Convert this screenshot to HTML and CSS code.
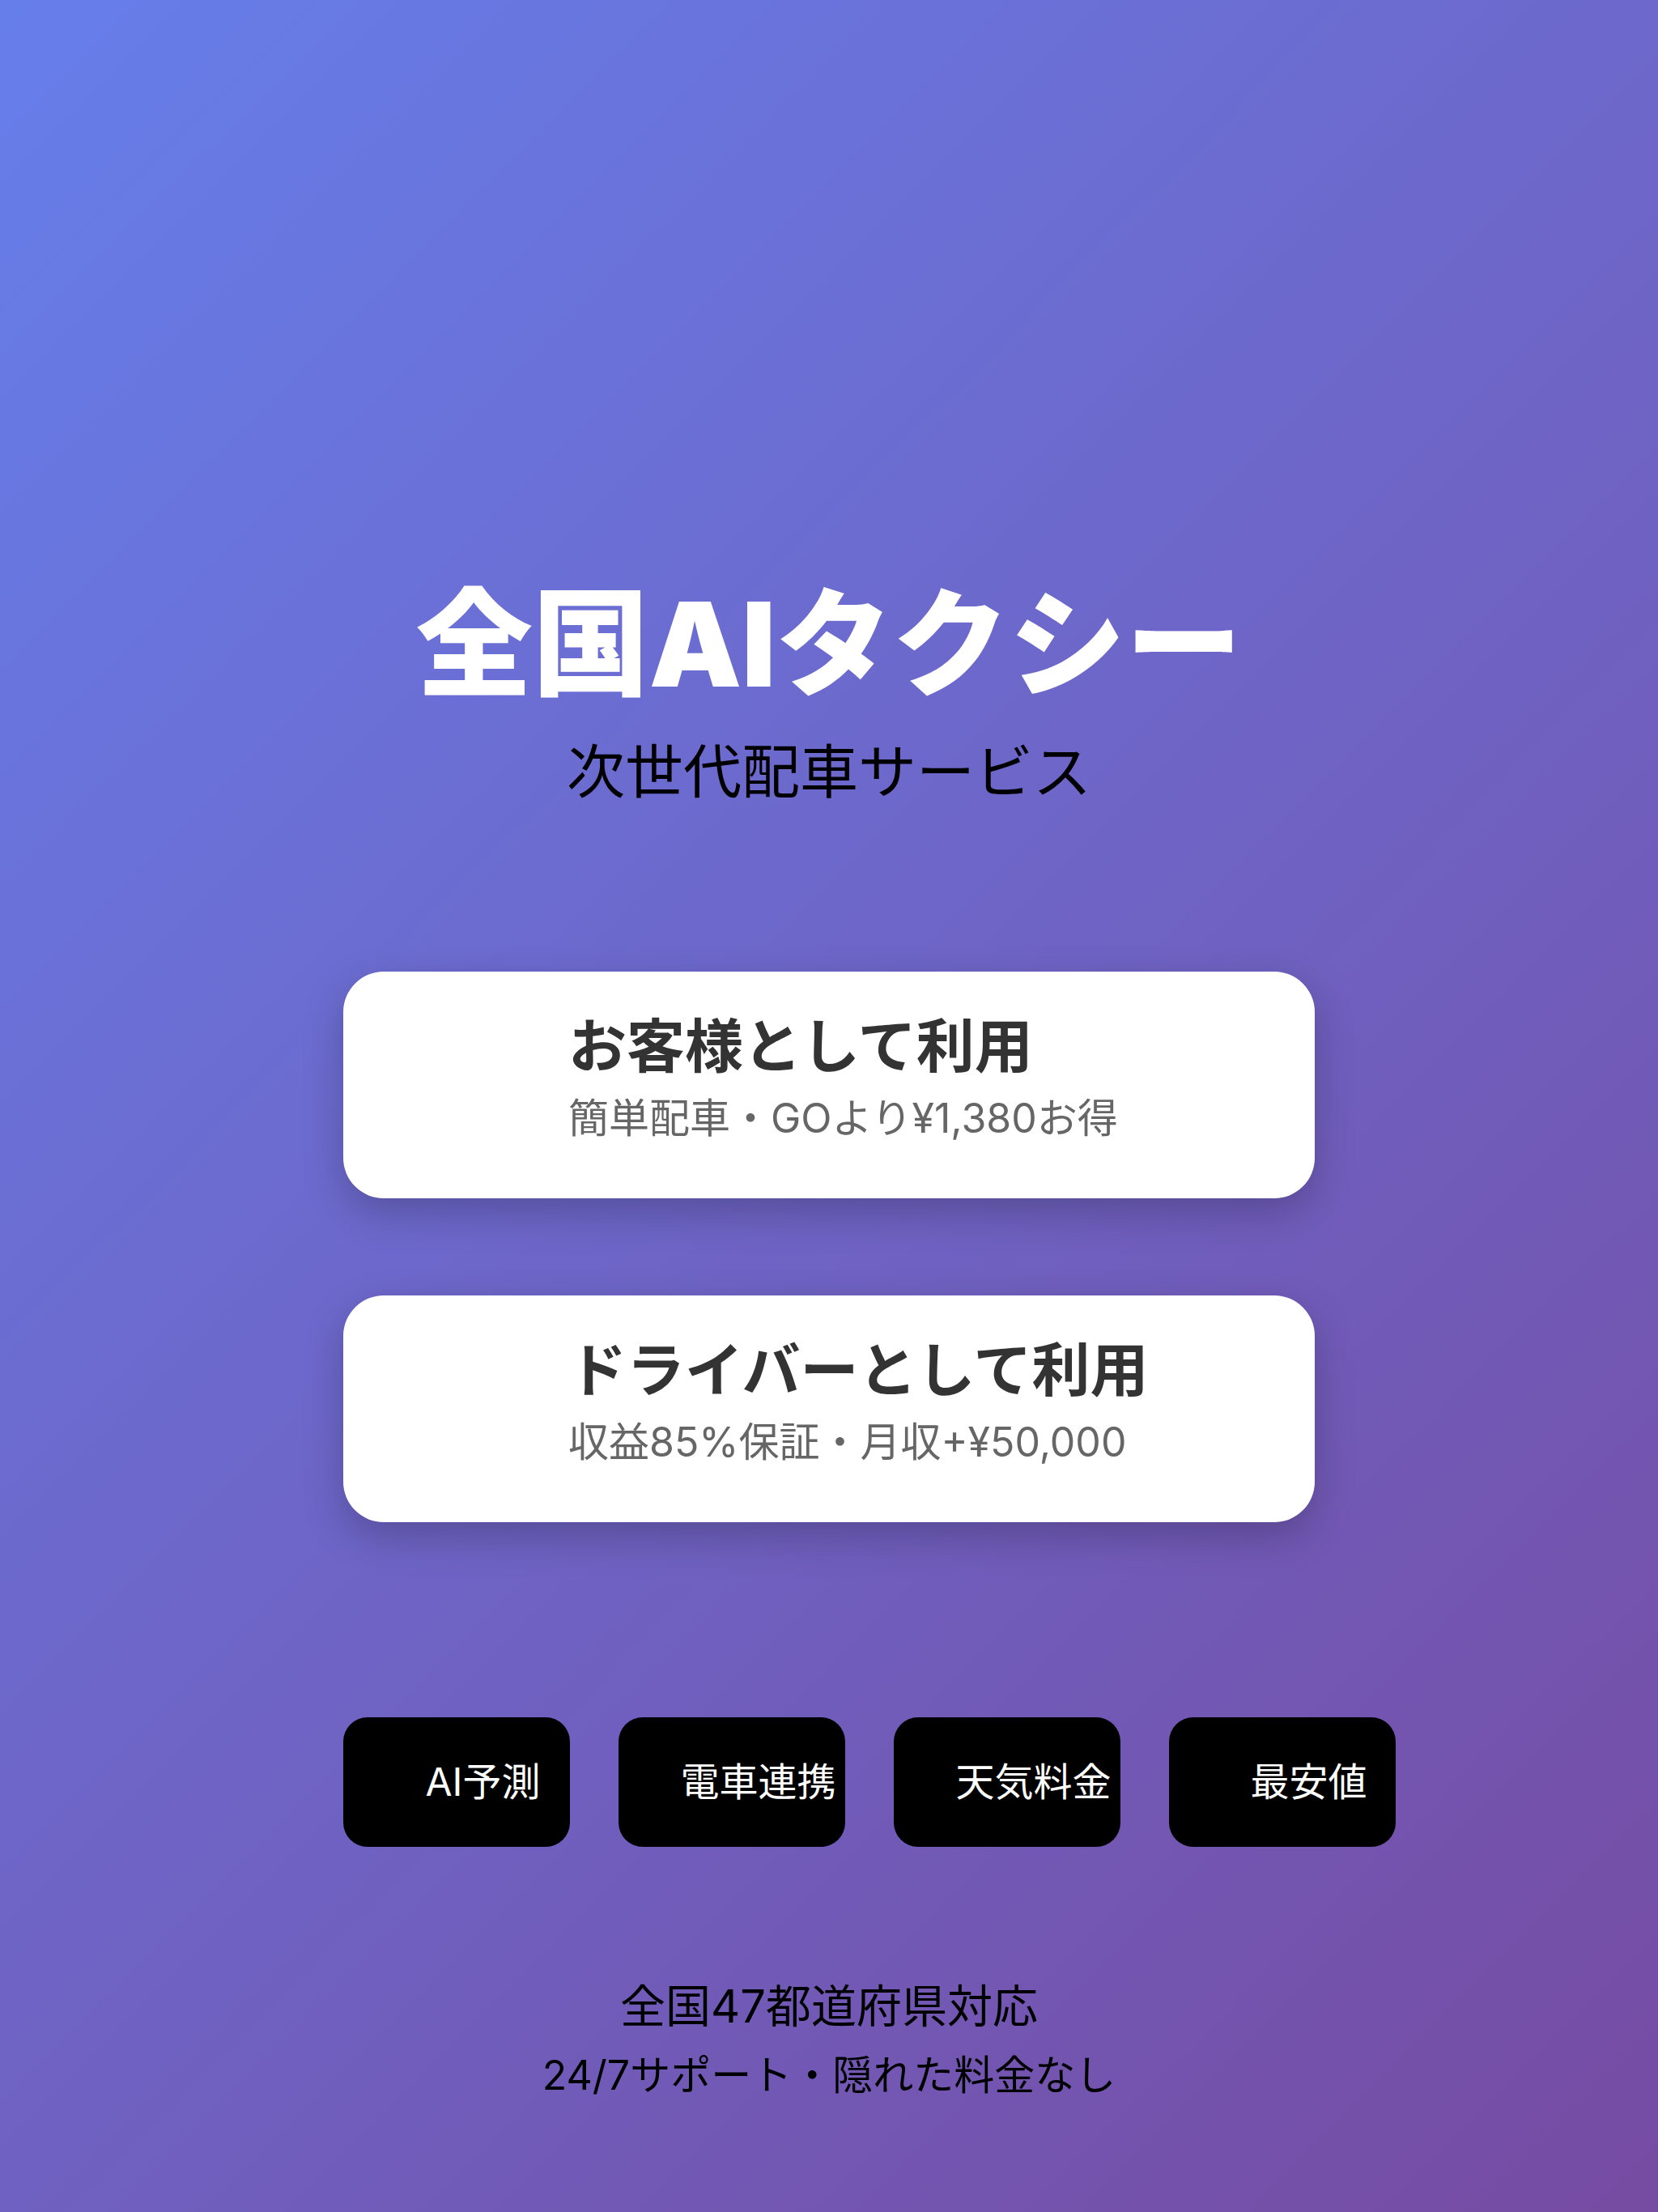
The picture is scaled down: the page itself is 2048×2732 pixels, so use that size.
FILE: index.html
```html
<!DOCTYPE html>
<html lang="ja">
<head>
<meta charset="utf-8">
<title>全国AIタクシー</title>
<link rel="stylesheet" href="styles.css">
</head>
<body>
<main class="page">
  <header class="hero">
    <h1 class="title">全国AIタクシー</h1>
    <p class="tagline">次世代配車サービス</p>
  </header>

  <section class="choices">
    <a class="choice" href="#">
      <span class="choice-icon" aria-hidden="true"></span>
      <span class="choice-body">
        <span class="choice-title">お客様として利用</span>
        <span class="choice-desc">簡単配車・GOより¥1,380お得</span>
      </span>
    </a>
    <a class="choice" href="#">
      <span class="choice-icon" aria-hidden="true"></span>
      <span class="choice-body">
        <span class="choice-title">ドライバーとして利用</span>
        <span class="choice-desc">収益85%保証・月収+¥50,000</span>
      </span>
    </a>
  </section>

  <ul class="features">
    <li class="feature"><span class="feature-icon" aria-hidden="true"></span><span class="feature-label">AI予測</span></li>
    <li class="feature"><span class="feature-icon" aria-hidden="true"></span><span class="feature-label">電車連携</span></li>
    <li class="feature"><span class="feature-icon" aria-hidden="true"></span><span class="feature-label">天気料金</span></li>
    <li class="feature"><span class="feature-icon" aria-hidden="true"></span><span class="feature-label">最安値</span></li>
  </ul>

  <footer class="foot">
    <p class="foot-main">全国47都道府県対応</p>
    <p class="foot-sub">24/7サポート・隠れた料金なし</p>
  </footer>
</main>
</body>
</html>
```

FILE: styles.css
```css
* {
  box-sizing: border-box;
}

html, body {
  margin: 0;
  padding: 0;
}

body {
  min-height: 100vh;
  background: linear-gradient(135deg, #667eea 0%, #764ba2 100%);
  font-family: Inter, "Noto Sans CJK JP", sans-serif;
  color: #000;
}

.page {
  width: 1200px;
  margin: 0 auto;
  padding-top: 710px;
  padding-bottom: 132px;
}

.hero {
  text-align: center;
}

.title {
  margin: 0;
  font-size: 144px;
  line-height: 172px;
  font-weight: 900;
  color: #fff;
  white-space: nowrap;
}

.tagline {
  margin: 17px 0 0;
  font-size: 72px;
  line-height: 108px;
  font-weight: 400;
  color: #000;
}

.choices {
  margin-top: 193px;
  display: flex;
  flex-direction: column;
  gap: 120px;
}

.choice {
  display: flex;
  align-items: center;
  gap: 40px;
  height: 280px;
  padding: 0 48px 14px;
  background: #fff;
  border-radius: 50px;
  box-shadow: 0 18px 50px rgba(0, 0, 0, 0.22);
  text-decoration: none;
}

.choice-icon {
  flex: 0 0 190px;
  height: 100px;
}

.choice-body {
  display: flex;
  flex-direction: column;
}

.choice-title {
  font-size: 72px;
  line-height: 86px;
  font-weight: 700;
  color: #333;
  white-space: nowrap;
}

.choice-desc {
  margin-top: 10px;
  font-size: 50px;
  line-height: 72px;
  color: #666;
  white-space: nowrap;
}

.features {
  list-style: none;
  margin: 241px 0 0;
  padding: 0;
  display: grid;
  grid-template-columns: repeat(4, 280px);
  gap: 60px;
}

.feature {
  height: 160px;
  padding-bottom: 1px;
  background: #000;
  border-radius: 30px;
  display: flex;
  align-items: center;
  justify-content: center;
  gap: 25px;
}

.feature-icon {
  flex: 0 0 40px;
  height: 40px;
}

.feature-label {
  font-size: 48px;
  line-height: 60px;
  color: #fff;
  white-space: nowrap;
}

.foot {
  margin-top: 155px;
  text-align: center;
}

.foot-main {
  margin: 0;
  font-size: 56px;
  line-height: 84px;
}

.foot-sub {
  margin: 7px 0 0;
  font-size: 50px;
  line-height: 72px;
}
```
